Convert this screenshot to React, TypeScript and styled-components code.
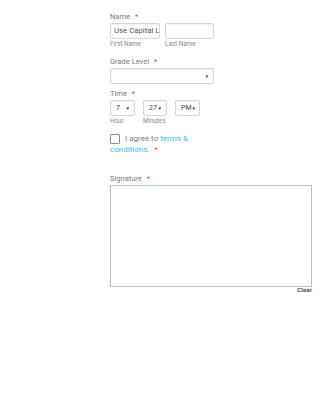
import React from 'react';
import styled, { createGlobalStyle } from 'styled-components';

const GlobalStyle = createGlobalStyle`
  html, body { margin: 0; padding: 0; background: #fff; }
  body { font-family: Roboto, 'Liberation Sans', sans-serif; }
  * { box-sizing: border-box; }
`;

const Form = styled.div`
  width: 312px;
  padding: 12px 0 0 110px;
  display: flex;
  flex-direction: column;
`;

const Field = styled.div<{ $gap?: number }>`
  display: flex;
  flex-direction: column;
  margin-bottom: ${(p) => p.$gap ?? 10}px;
`;

const Label = styled.div`
  font-size: 7.5px;
  color: #7d7d7d;
  line-height: 10px;
  margin-bottom: 1px;
`;

const Star = styled.span`
  color: #f23a3c;
  margin-left: 5px;
`;

const Row = styled.div<{ $gap: number }>`
  display: flex;
  gap: ${(p) => p.$gap}px;
`;

const Col = styled.div`
  display: flex;
  flex-direction: column;
`;

const TextBox = styled.div<{ $w: number }>`
  width: ${(p) => p.$w}px;
  height: 16px;
  border: 1px solid #d6d6d6;
  border-radius: 2px;
  box-shadow: inset 0 1px 2px rgba(0, 0, 0, 0.08);
  font-size: 7.8px;
  color: #555;
  line-height: 14px;
  padding-left: 3px;
  overflow: hidden;
  white-space: nowrap;
`;

const Sub = styled.div`
  font-size: 6.3px;
  color: #8a8a8a;
  margin-top: 1px;
  line-height: 8px;
`;

const Select = styled.div<{ $w: number }>`
  width: ${(p) => p.$w}px;
  height: 16px;
  border: 1px solid #d6d6d6;
  border-radius: 2px;
  box-shadow: inset 0 1px 2px rgba(0, 0, 0, 0.06);
  display: flex;
  align-items: center;
  justify-content: space-between;
  padding: 0 4px 0 5px;
  font-size: 7px;
  color: #444;
`;

const Arrow = styled.span`
  font-size: 4.5px;
  color: #333;
`;

const Agree = styled.div`
  display: flex;
  flex-direction: column;
  font-size: 8px;
  color: #808080;
  line-height: 11px;
  margin-top: 8px;
  margin-bottom: 19px;
`;

const AgreeLine = styled.div`
  display: flex;
  align-items: center;
  white-space: pre;
`;

const Box = styled.span`
  display: inline-block;
  width: 10px;
  height: 10px;
  border: 1px solid #8b8b8b;
  border-radius: 1px;
  margin-right: 5px;
`;

const Link = styled.span`
  color: #3cbde8;
`;

const Pad = styled.div`
  width: 202px;
  height: 102px;
  border: 1px solid #bdbdbd;
`;

const Clear = styled.div`
  align-self: flex-end;
  font-family: 'Liberation Sans', sans-serif;
  font-size: 6px;
  font-weight: bold;
  color: #444;
  text-decoration: underline;
`;

const Blank = styled.span`
  visibility: hidden;
`;

export default function App() {
  return (
    <>
      <GlobalStyle />
      <Form>
        <Field $gap={9}>
          <Label>Name<Star>*</Star></Label>
          <Row $gap={5}>
            <Col>
              <TextBox $w={50}>Use Capital L</TextBox>
              <Sub>First Name</Sub>
            </Col>
            <Col>
              <TextBox $w={49} />
              <Sub>Last Name</Sub>
            </Col>
          </Row>
        </Field>
        <Field $gap={5}>
          <Label>Grade Level<Star>*</Star></Label>
          <Select $w={104}><Blank>-</Blank><Arrow>▼</Arrow></Select>
        </Field>
        <Field $gap={0}>
          <Label>Time<Star>*</Star></Label>
          <Row $gap={8}>
            <Col>
              <Select $w={25}>7<Arrow>▼</Arrow></Select>
              <Sub>Hour</Sub>
            </Col>
            <Col>
              <Select $w={24}>27<Arrow>▼</Arrow></Select>
              <Sub>Minutes</Sub>
            </Col>
            <Col>
              <Select $w={25}>PM<Arrow>▼</Arrow></Select>
            </Col>
          </Row>
        </Field>
        <Agree>
          <AgreeLine>
            <Box />
            <span>I agree to </span>
            <Link>terms &amp;</Link>
          </AgreeLine>
          <AgreeLine>
            <Link>conditions.</Link>
            <Star>*</Star>
          </AgreeLine>
        </Agree>
        <Field $gap={0}>
          <Label>Signature<Star>*</Star></Label>
          <Pad />
          <Clear>Clear</Clear>
        </Field>
      </Form>
    </>
  );
}
